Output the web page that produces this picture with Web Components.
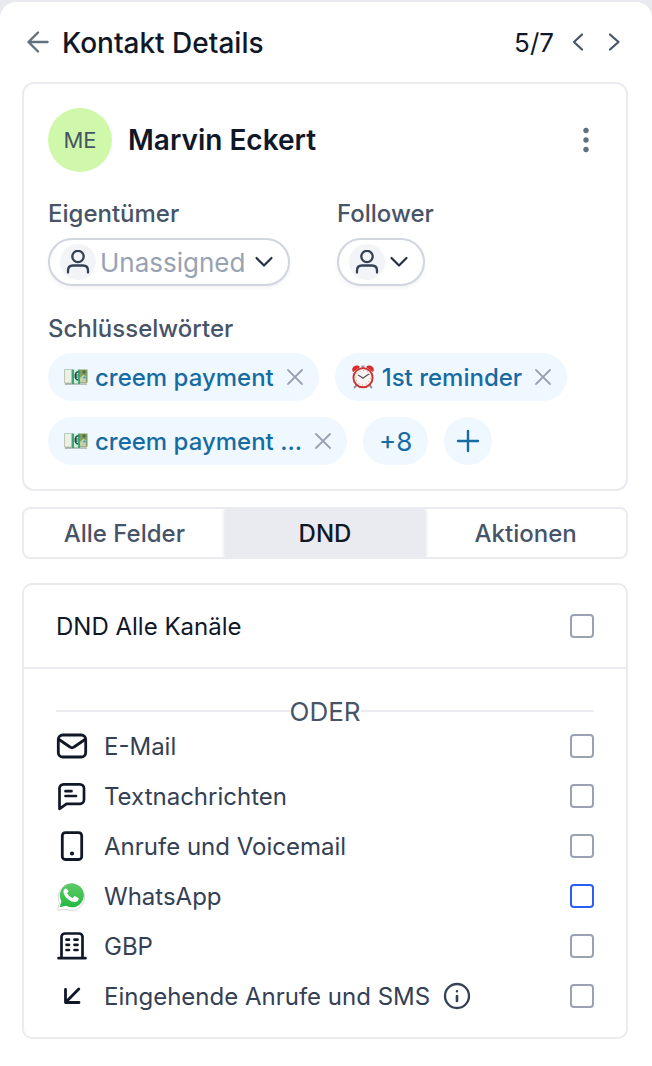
<!DOCTYPE html>
<html lang="de">
<head>
<meta charset="utf-8">
<meta name="viewport" content="width=device-width, initial-scale=1">
<title>Kontakt Details</title>
<style>
  html { background: #e9eaef; }
  body {
    margin: 0; min-height: 100vh; box-sizing: border-box; padding-top: 2px; display: flex;
    font-family: Inter, "Liberation Sans", sans-serif; font-size: 24px; line-height: 32px;
    font-optical-sizing: none; color: #101828;
    --line: #eaebf0; --muted: #475467; --body: #344054; --faint: #98a2b3;
    --tag-bg: #f0f8ff; --tag-ink: #176ba3;
  }
</style>
</head>
<body>
<contact-panel></contact-panel>

<template id="contact-panel">
  <style>
    :host { display: block; flex: 1; min-width: 0; background: #fff; border-radius: 16px 16px 0 0; }
    main { display: flex; flex-direction: column; padding: 0 24px 28px 22px; }
    contact-card { margin-bottom: 16px; }
    tab-bar { margin-bottom: 24px; }
  </style>
  <panel-header position="5/7">Kontakt Details</panel-header>
  <main>
    <contact-card name="Marvin Eckert" initials="ME">
      <tag-chip icon="money">creem payment</tag-chip>
      <tag-chip icon="clock">1st reminder</tag-chip>
      <tag-chip icon="money">creem payment ...</tag-chip>
    </contact-card>
    <tab-bar></tab-bar>
    <dnd-card></dnd-card>
  </main>
</template>

<template id="panel-header">
  <style>
    :host { display: flex; align-items: center; height: 80px; padding: 0 26px; }
    button { all: unset; display: grid; place-items: center; width: 24px; height: 24px; cursor: pointer; }
    h1 { margin: 0 auto 0 12px; padding-top: 2px; font-size: 28px; font-weight: 500; line-height: 36px; }
    span { padding-top: 2px; font-size: 26px; }
    nav { display: flex; align-items: center; gap: 12px; }
  </style>
  <button aria-label="Zurück"><ui-icon name="back"></ui-icon></button>
  <h1><slot></slot></h1>
  <nav aria-label="Kontakte">
    <span id="position"></span>
    <button aria-label="Vorheriger Kontakt"><ui-icon name="left"></ui-icon></button>
    <button aria-label="Nächster Kontakt"><ui-icon name="right"></ui-icon></button>
  </nav>
</template>

<template id="contact-card">
  <style>
    :host { display: block; border: 2px solid var(--line); border-radius: 12px; padding: 24px; }
    header { display: flex; align-items: center; gap: 16px; }
    .avatar { width: 64px; height: 64px; border-radius: 50%; background: #d0f8ab; color: var(--muted);
      display: grid; place-items: center; font-size: 22px; }
    h2 { margin: 0 auto 0 0; font-size: 28px; font-weight: 600; }
    button { all: unset; box-sizing: border-box; cursor: pointer; display: flex; align-items: center; }
    .people { display: grid; grid-template-columns: 1fr 1fr; gap: 24px; margin-top: 26px; }
    .label { display: block; margin-bottom: 8px; color: var(--muted); font-weight: 500; }
    .pill { display: inline-flex; align-items: center; box-sizing: border-box; height: 48px; padding: 0 14px 0 10px; gap: 4px;
      border: 2px solid #d0d5e0; border-radius: 24px; box-shadow: 0 2px 4px #1018280d; background: #fff; }
    .person { width: 36px; height: 36px; border-radius: 50%; background: #f2f4f8; display: grid; place-items: center; color: var(--body); }
    select { all: unset; padding-top: 2px; font-size: 26px; line-height: 32px; color: var(--faint); cursor: pointer; margin-right: 4px; }
    .tags { margin-top: 27px; }
    .list { display: flex; flex-wrap: wrap; gap: 16px; }
    .list button { height: 48px; border-radius: 24px; background: var(--tag-bg); color: var(--tag-ink); font-weight: 500; }
    .list .more { padding: 2px 16px 0; font-size: 26px; font-weight: 400; }
    .add { width: 48px; justify-content: center; }
  </style>
  <header>
    <div class="avatar" id="initials"></div>
    <h2 id="name"></h2>
    <button aria-label="Weitere Aktionen"><ui-icon name="dots"></ui-icon></button>
  </header>
  <div class="people">
    <div>
      <label class="label" for="owner">Eigentümer</label>
      <div class="pill">
        <span class="person"><ui-icon name="person"></ui-icon></span>
        <select id="owner"><option>Unassigned</option></select>
        <ui-icon name="down"></ui-icon>
      </div>
    </div>
    <div>
      <span class="label" id="follower">Follower</span>
      <button class="pill" aria-labelledby="follower" aria-haspopup="listbox">
        <span class="person"><ui-icon name="person"></ui-icon></span>
        <ui-icon name="down"></ui-icon>
      </button>
    </div>
  </div>
  <div class="tags">
    <span class="label">Schlüsselwörter</span>
    <div class="list">
      <slot></slot>
      <button class="more">+8</button>
      <button class="add" aria-label="Schlüsselwort hinzufügen"><ui-icon name="plus"></ui-icon></button>
    </div>
  </div>
</template>

<template id="tag-chip">
  <style>
    :host { display: flex; align-items: center; height: 48px; padding: 0 16px; border-radius: 24px;
      background: var(--tag-bg); color: var(--tag-ink); font-weight: 500; }
    span { margin: 0 13px 0 7px; padding-top: 2px; }
    button { all: unset; display: flex; color: var(--faint); cursor: pointer; }
  </style>
  <ui-icon id="icon"></ui-icon>
  <span><slot></slot></span>
  <button aria-label="Entfernen"><ui-icon name="close"></ui-icon></button>
</template>

<template id="tab-bar">
  <style>
    :host { display: grid; grid-template-columns: repeat(3, 1fr); border: 2px solid var(--line); border-radius: 8px; overflow: hidden; }
    button { all: unset; box-sizing: border-box; height: 48px; padding-top: 2px; text-align: center; font-weight: 500; color: var(--muted); cursor: pointer; }
    button[aria-selected=true] { background: var(--line); color: #101828; box-shadow: 0 0 4px #10182833; }
  </style>
  <button role="tab" aria-selected="false">Alle Felder</button>
  <button role="tab" aria-selected="true">DND</button>
  <button role="tab" aria-selected="false">Aktionen</button>
</template>

<template id="dnd-card">
  <style>
    :host { display: block; border: 2px solid var(--line); border-radius: 10px; }
    .all { padding: 16px 32px; border-bottom: 2px solid var(--line); }
    .channels { padding: 32px 32px 16px; color: var(--body); }
    .or { display: flex; align-items: center; height: 20px; font-size: 26px; color: var(--muted); }
    .or::before, .or::after { content: ""; flex: 1; height: 2px; background: var(--line); }
    .or span { padding-top: 2px; }
  </style>
  <div class="all"><check-row>DND Alle Kanäle</check-row></div>
  <div class="channels">
    <div class="or"><span>ODER</span></div>
    <check-row icon="mail">E-Mail</check-row>
    <check-row icon="message">Textnachrichten</check-row>
    <check-row icon="phone">Anrufe und Voicemail</check-row>
    <check-row icon="whatsapp" active>WhatsApp</check-row>
    <check-row icon="building">GBP</check-row>
    <check-row icon="incoming" info>Eingehende Anrufe und SMS</check-row>
  </div>
</template>

<template id="check-row">
  <style>
    :host { display: flex; align-items: center; height: 50px; }
    label { padding-top: 2px; }
    #icon { width: 32px; margin-right: 16px; color: #101828; }
    #info { all: unset; display: flex; margin-left: 13px; cursor: pointer; }
    input { appearance: none; box-sizing: border-box; width: 24px; height: 24px; margin: 0 0 0 auto;
      border: 2px solid var(--faint); border-radius: 4px; background: #fff; }
    input:checked { background: #2b5ff3; }
    :host([active]) input { border-color: #2b5ff3; }
  </style>
  <ui-icon id="icon"></ui-icon>
  <label for="box"><slot></slot></label>
  <button id="info" aria-label="Info"><ui-icon name="info"></ui-icon></button>
  <input type="checkbox" id="box">
</template>

<script>
  // Each entry: width, height, stroke width, drawing, optional colour.
  const icons = {
    back: [24, 24, 2.4, '<path d="M21.500 12H2.500M12 2.500 2.500 12l9.500 9.500"/>', '#60717c'],
    left: [24, 24, 2.2, '<path d="m16 4.500-8 7.500 8 7.500"/>', '#475467'],
    right: [24, 24, 2.2, '<path d="m8 4.500 8.500 7.500L8 19.500"/>', '#475467'],
    down: [20, 20, 2.2, '<path d="m2.500 6 7.500 7.500L17.500 6"/>', '#253047'],
    dots: [32, 32, 0, '<g fill="#60717c"><circle cx="16" cy="6.500" r="2.700"/><circle cx="16" cy="16" r="2.700"/><circle cx="16" cy="25.500" r="2.700"/></g>'],
    person: [24, 24, 2.3, '<circle cx="12" cy="6.500" r="5.700"/><path d="M2 22.500v-2c0-3 1.500-5 5-5h10c3.500 0 5 2 5 5v2"/>'],
    plus: [24, 24, 2.4, '<path d="M12 2v20M2 12h20"/>'],
    close: [16, 16, 1.8, '<path d="m1 1 14 14M15 1 1 15"/>'],
    mail: [32, 32, 2.8, '<rect x="2.300" y="5" width="27.400" height="22" rx="4.500"/><path d="M3 9.500 14 17q2 1.600 4 0L29 9.500"/>'],
    message: [32, 32, 2.7, '<path d="M7.500 4.300h16.500a4 4 0 0 1 4 4v11.500a4 4 0 0 1-4 4H10.500l-7 5V8.300a4 4 0 0 1 4-4zM9.500 11.200h6M9.500 16h10.500"/>'],
    phone: [32, 32, 2.8, '<rect x="6.300" y="2.700" width="19.400" height="26.800" rx="3"/><circle cx="16" cy="23.500" r="1.300" fill="currentColor" stroke-width="1.600"/>'],
    building: [32, 32, 2.7, '<path d="M2.500 28.200h27M5.500 28V7A3.500 3.500 0 0 1 9 3.500h14A3.500 3.500 0 0 1 26.500 7v21M10.500 9.700h2.500M18.500 9.700h3M10.500 14.800h2.500M18.500 14.800h3M10.500 20h2.500M18.500 20h3"/>'],
    incoming: [32, 32, 2.8, '<path d="M22.800 9 9.500 22.500M9.500 9.300v13.200H23"/>'],
    info: [28, 28, 2.3, '<circle cx="14" cy="14" r="12"/><path d="M14 14v5M14 9.200v.1" stroke-width="2.600"/>'],
    whatsapp: [32, 32, 0, '<g transform="translate(-1 1)"><path d="m2.500 29.200 2-7.200A13.200 13.200 0 1 1 11 28.300z" fill="#fff" stroke="#d5d8dc" stroke-width="1"/><defs><linearGradient id="g" x2="0" y2="1"><stop stop-color="#5ecb66"/><stop offset="1" stop-color="#25b843"/></linearGradient></defs><path d="m4.700 26.200 1.700-6A12 12 0 1 1 11 24.800z" fill="url(#g)"/><path d="M12 8.300c-.5-1-2-1-2.700 0-3.500 4.500 5.500 14.200 11.700 12.500 2-.6 3.200-2.500 2.500-3.800l-3.700-2c-1 0-1.400 2-2.300 1.900-2.400-.8-4.300-2.600-5.200-4.600 0-.8 1.300-1.300 1.300-2.200z" fill="#fff"/></g>'],
    money: [24, 24, 0, '<path d="M.5 5.500 23 5v13.500l-22 .7z" fill="#bcc8b4"/><path d="M.5 4.500h7v13.500h-7z" fill="#edf1e4" stroke="#a8b3a0" stroke-width=".7"/><path d="M8 4.500h6v13.500H8z" fill="#dceadd"/><path d="M8 4.500h2v14.500H8zM14 4.500h2v14.500h-2z" fill="#31aa7b"/><path d="M16 4.500h7.500v13H16z" fill="#829d60"/><path d="M14.500 7c-4-1-4.500 8-.5 8M10.500 10h3M10.500 12h3" fill="none" stroke="#254f48" stroke-width="1.500"/><path d="m16 13 3-3 3 1v6h-6z" fill="#c1d0a6"/><circle cx="20.500" cy="12.500" r="1.200" fill="#4b9cc8"/><circle cx="20" cy="7" r="1.800" fill="#536e3d"/><path d="M1 19.200h22" stroke="#788873" stroke-width=".7"/>'],
    clock: [24, 24, 0, '<path d="m6 20-3 3M18 20l3 3" stroke="#929292" stroke-width="1.800"/><path d="M2 7C-1 3 5-2 9 2zM22 7c3-4-3-9-7-5z" fill="#d92b2d"/><path d="M12 .5v3" stroke="#9a9a9a" stroke-width="3"/><circle cx="12" cy="12.700" r="9.600" fill="#f7f5f2" stroke="#cf3233" stroke-width="1.900"/><circle cx="12" cy="12.700" r="7.200" fill="none" stroke="#dc9595" stroke-width="1.200" stroke-dasharray=".8 2.970"/><path d="m7 10 5 3 6-4" fill="none" stroke="#555" stroke-width="1.100"/><circle cx="12" cy="13" r="1" fill="#777"/>']
  };

  class BaseElement extends HTMLElement {
    constructor() {
      super();
      const template = document.getElementById(this.localName);
      this.attachShadow({ mode: 'open' }).append(template.content.cloneNode(true));
    }
    byId(id) { return this.shadowRoot.getElementById(id); }
  }

  customElements.define('ui-icon', class extends HTMLElement {
    static observedAttributes = ['name'];
    constructor() { super(); this.attachShadow({ mode: 'open' }); }
    attributeChangedCallback() {
      const icon = icons[this.getAttribute('name')];
      if (!icon) return;
      const [w, h, stroke, drawing, color] = icon;
      this.shadowRoot.innerHTML = `<style>:host{display:flex;flex:none;justify-content:center}svg{display:block}</style>
        <svg width="${w}" height="${h}" viewBox="0 0 ${w} ${h}" fill="none" aria-hidden="true"
          ${stroke ? `stroke="${color || 'currentColor'}" stroke-width="${stroke}" stroke-linecap="round" stroke-linejoin="round"` : ''}>${drawing}</svg>`;
    }
  });
  customElements.define('panel-header', class extends BaseElement {
    connectedCallback() { this.byId('position').textContent = this.getAttribute('position'); }
  });
  customElements.define('contact-card', class extends BaseElement {
    connectedCallback() {
      this.byId('name').textContent = this.getAttribute('name');
      this.byId('initials').textContent = this.getAttribute('initials');
    }
  });
  customElements.define('tag-chip', class extends BaseElement {
    connectedCallback() { this.byId('icon').setAttribute('name', this.getAttribute('icon')); }
  });
  customElements.define('tab-bar', class extends BaseElement {
    connectedCallback() {
      this.setAttribute('role', 'tablist');
      const tabs = this.shadowRoot.querySelectorAll('button');
      tabs.forEach(tab => { tab.onclick = () => tabs.forEach(t => t.setAttribute('aria-selected', t === tab)); });
    }
  });
  customElements.define('check-row', class extends BaseElement {
    connectedCallback() {
      if (this.hasAttribute('icon')) this.byId('icon')?.setAttribute('name', this.getAttribute('icon'));
      else this.byId('icon')?.remove();
      if (!this.hasAttribute('info')) this.byId('info')?.remove();
    }
  });
  customElements.define('dnd-card', class extends BaseElement {});
  customElements.define('contact-panel', class extends BaseElement {});
</script>
</body>
</html>
